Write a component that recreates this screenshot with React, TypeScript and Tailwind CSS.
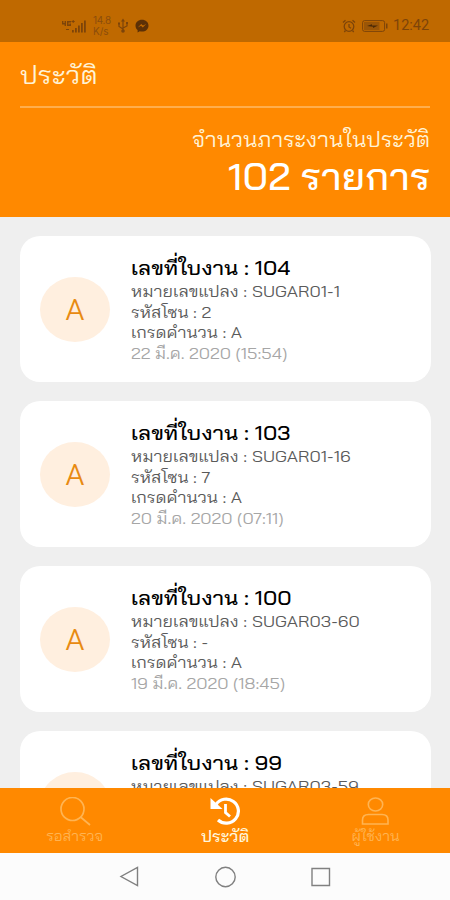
import type { ReactNode } from 'react';
import { clsx } from 'clsx';

type Job = {
  no: string;
  plot: string;
  zone: string;
  grade: string;
  date: string;
};

const JOBS: Job[] = [
  { no: '104', plot: 'SUGAR01-1', zone: '2', grade: 'A', date: '22 มี.ค. 2020 (15:54)' },
  { no: '103', plot: 'SUGAR01-16', zone: '7', grade: 'A', date: '20 มี.ค. 2020 (07:11)' },
  { no: '100', plot: 'SUGAR03-60', zone: '-', grade: 'A', date: '19 มี.ค. 2020 (18:45)' },
  { no: '99', plot: 'SUGAR03-59', zone: '-', grade: 'A', date: '19 มี.ค. 2020 (18:40)' },
];

function StatusBar() {
  return (
    <div className="flex h-[42px] shrink-0 items-center bg-[#bf6900] pt-[10px] pl-[61px] pr-5 text-[#7d4409]">
      <svg viewBox="0 0 26 16" className="h-4 w-[26px]" fill="currentColor" aria-hidden>
        <path d="M1 3h1.400v2h1.200V3H5v5H3.600V6.400H1zM6 3h4v1.400H7.500V6.600h1V5.500H10V8H6zM10.500 3h1.200V2h1v1h1v1h-1v1h-1V4h-1.200z" />
        <path d="M5 11h3v1H5zM11 12h1.800v2.500H11zM14 10h1.800v4.500H14zM17 7.500h1.800v7H17zM20 5h1.800v9.500H20zM23 2.500h1.800v12H23z" />
      </svg>
      <div className="ml-[6px] w-[19px] font-['Inter',sans-serif] text-[10px] leading-[11px] text-[#8b4d0c]">
        <div className="whitespace-nowrap tracking-[-0.3px]">14.8</div>
        <div>K/s</div>
      </div>
      <svg viewBox="0 0 12 16" className="ml-[5px] h-4 w-3" fill="none" stroke="currentColor" strokeWidth="1.200" aria-hidden>
        <path d="M6 3v9M2 6v2.500L6 11M10 5.500V8L6 10" />
        <path d="M6 .5 4 3.500h4zM1 4.500h2v2H1zM9 4h2v2H9z" fill="currentColor" stroke="none" />
        <circle cx="6" cy="13" r="1.800" fill="currentColor" stroke="none" />
      </svg>
      <svg viewBox="0 0 14 14" className="ml-[6px] size-[14px] text-[#5c3006]" aria-hidden>
        <path d="M7 .8C3.300.8.500 3.300.5 6.700c0 1.800.8 3.300 2.100 4.400v2.400l2.200-1.200c.7.200 1.400.3 2.200.3 3.700 0 6.500-2.600 6.500-5.900S10.700.8 7 .8z" fill="currentColor" />
        <path d="m2.800 8.500 3.400-3.600 1.800 1.700 3.200-1.700-3.400 3.600L6 6.800z" fill="#bf6900" />
      </svg>
      <svg viewBox="0 0 14 14" className="ml-auto size-[14px]" fill="none" stroke="currentColor" strokeWidth="1.300" aria-hidden>
        <circle cx="7" cy="7.500" r="4.800" />
        <path d="M7 5v3l2 1.300M1 3.500 3.500 1.200M13 3.500l-2.500-2.300M3.500 11.500 2.300 13M10.500 11.500l1.200 1.500" />
      </svg>
      <svg viewBox="0 0 26 12" className="ml-[6px] h-3 w-[26px]" aria-hidden>
        <rect x=".6" y=".6" width="22" height="10.800" rx="2" fill="none" stroke="currentColor" />
        <rect x="2" y="2" width="15.500" height="8" fill="#9b5607" />
        <path d="M24 3.500h1.500v5H24z" fill="currentColor" />
        <path d="m5 6 5-1.800v1.200h6L11 7.900V6.700z" fill="#4b2906" />
      </svg>
      <span className="ml-[5px] w-[37px] whitespace-nowrap font-['Roboto',sans-serif] text-[14.500px] leading-4">12:42</span>
    </div>
  );
}

function JobCard({ job }: { job: Job }) {
  return (
    <article className="flex h-[146px] shrink-0 rounded-[20px] bg-white pl-5">
      <div className="mt-[41px] flex h-[65px] w-[70px] shrink-0 items-center justify-center rounded-[50%] bg-[#ffefdf] text-[30px] text-[#e88a12]">
        {job.grade}
      </div>
      <div className="ml-5 mt-[19px] origin-left scale-x-[1.09] self-start whitespace-nowrap pl-px text-[16px] leading-[20.600px] text-[#5a5a5a]">
        <h2 className="h-[26px] text-[20.100px] font-medium leading-[26px] text-black">
          เลขที่ใบงาน : {job.no}
        </h2>
        <p className="tracking-[0.080px]">หมายเลขแปลง : {job.plot}</p>
        <p>รหัสโซน : {job.zone}</p>
        <p>เกรดคำนวน : {job.grade}</p>
        <p className="text-[#a6a6a6]">{job.date}</p>
      </div>
    </article>
  );
}

function Tab({ label, active, children }: { label: string; active?: boolean; children: ReactNode }) {
  return (
    <button
      type="button"
      className={clsx('flex flex-1 flex-col items-center pt-[9px]', active ? 'text-white' : 'text-[#ffb452]')}
    >
      {children}
      <span
        className={clsx(
          'whitespace-nowrap leading-[18px]',
          active ? 'scale-x-[1.09] text-[15.500px] font-medium text-[#fff6dd]' : 'scale-x-[1.07] text-[14px]',
        )}
      >
        {label}
      </span>
    </button>
  );
}

export default function App() {
  return (
    <div className="flex h-[900px] w-[450px] flex-col overflow-hidden bg-[#efefef] font-['Bai_Jamjuree','Inter','Noto_Sans_Thai',sans-serif]">
      <StatusBar />
      <header className="h-[175px] shrink-0 bg-[#ff8900] px-5 text-[#fff3d6]">
        <h1 className="h-[66px] border-b-2 border-[#ffae4d] pt-4 text-[25.500px] leading-8">
          <span className="inline-block origin-left scale-x-[1.08]">ประวัติ</span>
        </h1>
        <div className="origin-right scale-x-[1.075] pt-[17px] text-right">
          <p className="text-[21px] leading-[28px]">จำนวนภาระงานในประวัติ</p>
          <p className="text-[36.500px] font-medium leading-[46px] text-white">102 รายการ</p>
        </div>
      </header>

      <main className="flex min-h-0 flex-1 flex-col gap-[19px] overflow-hidden pl-5 pr-[19px] pt-[19px]">
        {JOBS.map((job) => (
          <JobCard key={job.no} job={job} />
        ))}
      </main>

      <nav className="flex h-[65px] shrink-0 bg-[#ff8900]">
        <Tab label="รอสำรวจ">
          <svg viewBox="0 0 32 30" className="h-[30px] w-8" fill="none" stroke="currentColor" strokeWidth="1.700" aria-hidden>
            <circle cx="13.500" cy="12" r="11.500" />
            <path d="m21.500 20 9.500 8" />
          </svg>
        </Tab>
        <Tab label="ประวัติ" active>
          <svg viewBox="0 0 30 30" className="size-[30px]" fill="none" stroke="currentColor" strokeWidth="3.200" aria-hidden>
            <path d="M6 7.500a12.200 12 0 1 1 2 15.500" />
            <path d="M15.500 7v8.500l4.500 4" strokeWidth="2.800" />
            <path d="M.5 1v11h12z" fill="currentColor" stroke="none" />
          </svg>
        </Tab>
        <Tab label="ผู้ใช้งาน">
          <svg viewBox="0 0 28 30" className="h-[30px] w-7" fill="none" stroke="currentColor" strokeWidth="1.600" aria-hidden>
            <ellipse cx="14.500" cy="7.500" rx="7.200" ry="6.500" />
            <path d="M1.500 27v-4c0-4 3-5.500 6-5.500h13.500c3 0 6 1.500 6 5.500v4z" />
          </svg>
        </Tab>
      </nav>

      <footer className="flex h-[47px] shrink-0 items-center justify-center gap-[75px] bg-[#fcfcfc] text-[#808080]">
        <svg viewBox="0 0 20 22" className="h-[22px] w-5" fill="none" stroke="currentColor" strokeWidth="1.400" aria-hidden>
          <path d="M18.500 1.500v18L2 10.500z" />
        </svg>
        <svg viewBox="0 0 22 22" className="size-[22px]" fill="none" stroke="currentColor" strokeWidth="1.400" aria-hidden>
          <circle cx="11.500" cy="11" r="9.700" />
        </svg>
        <svg viewBox="0 0 20 20" className="size-5" fill="none" stroke="currentColor" strokeWidth="1.400" aria-hidden>
          <path d="M1 1.500h17.500v17H1z" />
        </svg>
      </footer>
    </div>
  );
}
